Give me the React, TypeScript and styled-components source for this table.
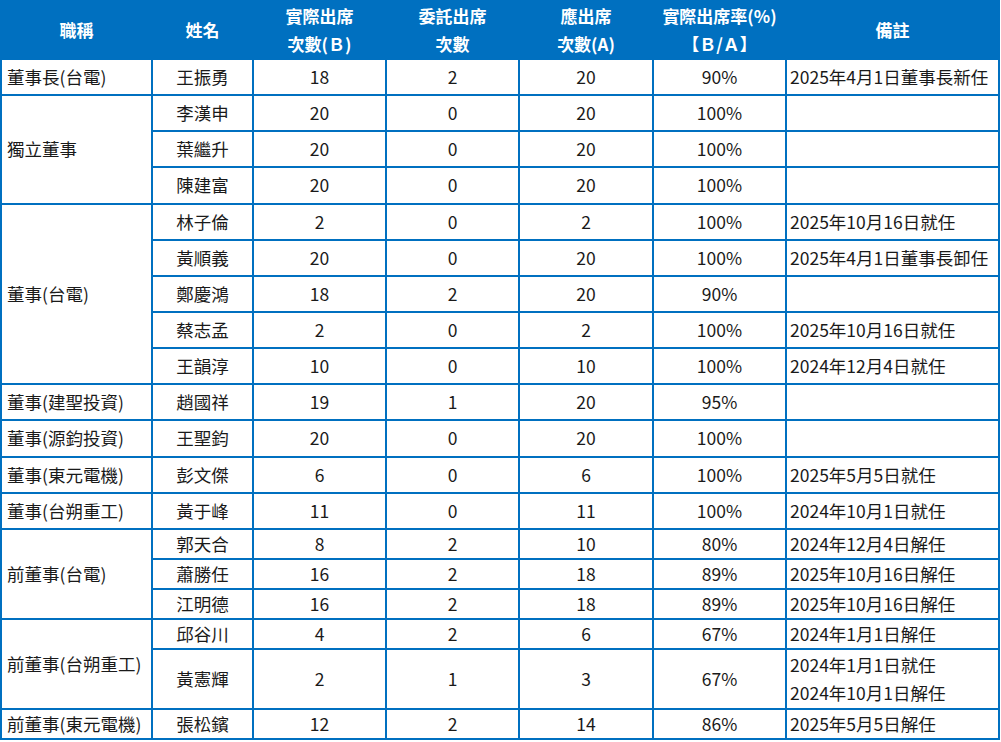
import { Fragment } from "react";
import styled, { createGlobalStyle } from "styled-components";

type Member = {
  name: string;
  actual: number;
  proxy: number;
  expected: number;
  rate: string;
  notes?: string[];
  height?: number;
};

type Group = {
  title: string;
  members: Member[];
};

const groups: Group[] = [
  {
    title: "董事長(台電)",
    members: [{ name: "王振勇", actual: 18, proxy: 2, expected: 20, rate: "90%", notes: ["2025年4月1日董事長新任"] }],
  },
  {
    title: "獨立董事",
    members: [
      { name: "李漢申", actual: 20, proxy: 0, expected: 20, rate: "100%" },
      { name: "葉繼升", actual: 20, proxy: 0, expected: 20, rate: "100%" },
      { name: "陳建富", actual: 20, proxy: 0, expected: 20, rate: "100%" },
    ],
  },
  {
    title: "董事(台電)",
    members: [
      { name: "林子倫", actual: 2, proxy: 0, expected: 2, rate: "100%", notes: ["2025年10月16日就任"] },
      { name: "黃順義", actual: 20, proxy: 0, expected: 20, rate: "100%", notes: ["2025年4月1日董事長卸任"] },
      { name: "鄭慶鴻", actual: 18, proxy: 2, expected: 20, rate: "90%" },
      { name: "蔡志孟", actual: 2, proxy: 0, expected: 2, rate: "100%", notes: ["2025年10月16日就任"] },
      { name: "王韻淳", actual: 10, proxy: 0, expected: 10, rate: "100%", notes: ["2024年12月4日就任"] },
    ],
  },
  {
    title: "董事(建聖投資)",
    members: [{ name: "趙國祥", actual: 19, proxy: 1, expected: 20, rate: "95%" }],
  },
  {
    title: "董事(源鈞投資)",
    members: [{ name: "王聖鈞", actual: 20, proxy: 0, expected: 20, rate: "100%" }],
  },
  {
    title: "董事(東元電機)",
    members: [{ name: "彭文傑", actual: 6, proxy: 0, expected: 6, rate: "100%", notes: ["2025年5月5日就任"] }],
  },
  {
    title: "董事(台朔重工)",
    members: [{ name: "黃于峰", actual: 11, proxy: 0, expected: 11, rate: "100%", notes: ["2024年10月1日就任"] }],
  },
  {
    title: "前董事(台電)",
    members: [
      { name: "郭天合", actual: 8, proxy: 2, expected: 10, rate: "80%", notes: ["2024年12月4日解任"], height: 30 },
      { name: "蕭勝任", actual: 16, proxy: 2, expected: 18, rate: "89%", notes: ["2025年10月16日解任"], height: 30 },
      { name: "江明德", actual: 16, proxy: 2, expected: 18, rate: "89%", notes: ["2025年10月16日解任"], height: 30 },
    ],
  },
  {
    title: "前董事(台朔重工)",
    members: [
      { name: "邱谷川", actual: 4, proxy: 2, expected: 6, rate: "67%", notes: ["2024年1月1日解任"], height: 30 },
      {
        name: "黃憲輝",
        actual: 2,
        proxy: 1,
        expected: 3,
        rate: "67%",
        notes: ["2024年1月1日就任", "2024年10月1日解任"],
        height: 60,
      },
    ],
  },
  {
    title: "前董事(東元電機)",
    members: [{ name: "張松鑌", actual: 12, proxy: 2, expected: 14, rate: "86%", notes: ["2025年5月5日解任"], height: 30 }],
  },
];

const colWidths = [151, 101, 133, 133, 134, 133, 213];

export default function App() {
  return (
    <>
      <GlobalStyle />
      <Table>
        <colgroup>
          {colWidths.map((w, i) => (
            <col key={i} style={{ width: w }} />
          ))}
        </colgroup>
        <thead>
          <HeadRow>
            <HeadCell>職稱</HeadCell>
            <HeadCell>姓名</HeadCell>
            <HeadCell>
              實際出席
              <br />
              次數(Ｂ)
            </HeadCell>
            <HeadCell>
              委託出席
              <br />
              次數
            </HeadCell>
            <HeadCell>
              應出席
              <br />
              次數(A)
            </HeadCell>
            <HeadCell>
              實際出席率(%)
              <br />
              【Ｂ/Ａ】
            </HeadCell>
            <HeadCell>備註</HeadCell>
          </HeadRow>
        </thead>
        <tbody>
          {groups.map((g) => (
            <Fragment key={g.title}>
              {g.members.map((m, i) => (
                <Row key={m.name} $h={m.height ?? 36.15}>
                  {i === 0 && (
                    <Cell $align="left" rowSpan={g.members.length}>
                      {g.title}
                    </Cell>
                  )}
                  <Cell>{m.name}</Cell>
                  <Cell>{m.actual}</Cell>
                  <Cell>{m.proxy}</Cell>
                  <Cell>{m.expected}</Cell>
                  <Cell>{m.rate}</Cell>
                  <NoteCell>
                    {m.notes?.map((n) => (
                      <div key={n}>{n}</div>
                    ))}
                  </NoteCell>
                </Row>
              ))}
            </Fragment>
          ))}
        </tbody>
      </Table>
    </>
  );
}

const GlobalStyle = createGlobalStyle`
  body {
    margin: 0;
    background: #fff;
    font-family: "Noto Sans CJK TC", "Noto Sans", sans-serif;
  }
`;

const Table = styled.table`
  width: 999px;
  table-layout: fixed;
  border-collapse: collapse;
  font-size: 17.5px;
  color: #1a1a1a;
`;

const HeadRow = styled.tr`
  height: 58px;
  background: #0070c0;
`;

const HeadCell = styled.th`
  border: 2px solid #0070c0;
  color: #fff;
  font-weight: 700;
  font-size: 17px;
  line-height: 28px;
  padding: 0;
  text-align: center;
  vertical-align: middle;
`;

const Row = styled.tr<{ $h: number }>`
  height: ${(p) => p.$h}px;
`;

const Cell = styled.td<{ $align?: "left" | "center" }>`
  border: 2px solid #0070c0;
  padding: 0 ${(p) => (p.$align === "left" ? "5px" : "0")};
  text-align: ${(p) => p.$align ?? "center"};
  line-height: 26px;
  vertical-align: middle;
  white-space: nowrap;
`;

const NoteCell = styled.td`
  border: 2px solid #0070c0;
  padding: 0 3px;
  text-align: left;
  line-height: 28px;
  vertical-align: middle;
  white-space: nowrap;
`;
